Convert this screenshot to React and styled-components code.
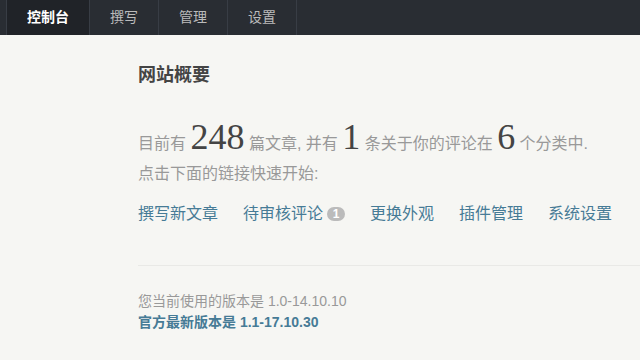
import styled, { createGlobalStyle } from 'styled-components';

const Global = createGlobalStyle`
  html, body {
    margin: 0;
    padding: 0;
    background: #f6f6f3;
    font-family: "Liberation Sans", "Noto Sans CJK SC", sans-serif;
    color: #444;
    font-size: 14px;
  }
  * { box-sizing: border-box; }
`;

const Nav = styled.nav`
  display: flex;
  height: 35px;
  background: #292d33;
  padding-left: 6px;
`;

const Tab = styled.a`
  display: block;
  height: 35px;
  line-height: 35px;
  padding: 0 20px;
  font-size: 14px;
  text-decoration: none;
  color: ${p => (p.$active ? '#fff' : '#bbb')};
  font-weight: ${p => (p.$active ? 'bold' : 'normal')};
  background: ${p => (p.$active ? '#202328' : 'transparent')};
  border-right: 1px solid #383d45;
  &:first-child { border-left: 1px solid #383d45; }
`;

const Main = styled.main`
  padding: 28px 0 0 138px;
`;

const Title = styled.h3`
  margin: 0;
  font-size: 18px;
  line-height: 24px;
  font-weight: bold;
  color: #444;
`;

const Stats = styled.p`
  margin: 32px 0 0;
  font-size: 16px;
  line-height: 40px;
  height: 40px;
  color: #999;
`;

const Num = styled.em`
  font-style: normal;
  font-family: "Liberation Serif", serif;
  font-size: 36px;
  line-height: 1;
  color: #444;
`;

const Hint = styled.p`
  margin: 3px 0 0;
  font-size: 16px;
  line-height: 24px;
  color: #999;
`;

const Links = styled.ul`
  display: flex;
  gap: 25px;
  list-style: none;
  margin: 16px 0 0;
  padding: 0;
  font-size: 16px;
  line-height: 24px;

  a {
    color: #467b96;
    text-decoration: none;
  }
`;

const Balloon = styled.span`
  box-sizing: content-box;
  display: inline-block;
  min-width: 10px;
  height: 14px;
  line-height: 14px;
  padding: 0 4px;
  margin-left: 4px;
  vertical-align: 1px;
  border-radius: 30px;
  background: #bbb;
  color: #fff;
  font-size: 12px;
  font-weight: bold;
  text-align: center;
`;

const Divider = styled.hr`
  margin: 39px 0 0;
  border: none;
  border-top: 1px solid #e9e9e6;
`;

const Version = styled.div`
  margin-top: 25px;
  font-size: 14px;
  line-height: 21px;
  color: #999;

  p { margin: 0; }
  strong { color: #467b96; }
`;

const tabs = ['控制台', '撰写', '管理', '设置'];
const starts = [
  { text: '撰写新文章' },
  { text: '待审核评论', badge: 1 },
  { text: '更换外观' },
  { text: '插件管理' },
  { text: '系统设置' },
];

export default function App() {
  return (
    <>
      <Global />
      <Nav>
        {tabs.map((t, i) => (
          <Tab key={t} href="#" $active={i === 0}>{t}</Tab>
        ))}
      </Nav>
      <Main>
        <Title>网站概要</Title>
        <Stats>
          目前有 <Num>248</Num> 篇文章, 并有 <Num>1</Num> 条关于你的评论在 <Num>6</Num> 个分类中.
        </Stats>
        <Hint>点击下面的链接快速开始:</Hint>
        <Links>
          {starts.map(s => (
            <li key={s.text}>
              <a href="#">{s.text}</a>
              {s.badge && <Balloon>{s.badge}</Balloon>}
            </li>
          ))}
        </Links>
        <Divider />
        <Version>
          <p>您当前使用的版本是 1.0-14.10.10</p>
          <p><strong>官方最新版本是 1.1-17.10.30</strong></p>
        </Version>
      </Main>
    </>
  );
}
